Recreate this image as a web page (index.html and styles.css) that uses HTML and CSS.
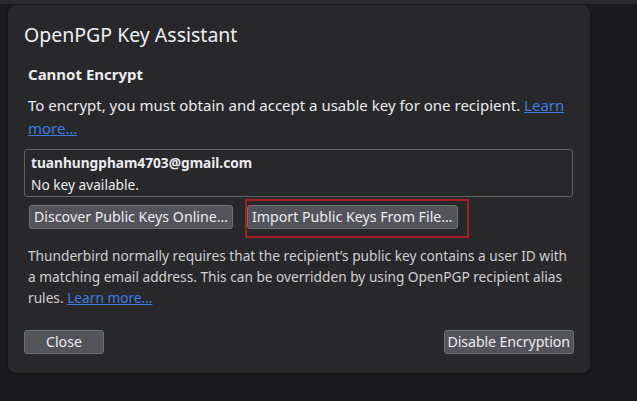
FILE: index.html
```html
<!DOCTYPE html>
<html lang="en">
<head>
<meta charset="utf-8">
<title>OpenPGP Key Assistant</title>
<link rel="stylesheet" href="styles.css">
</head>
<body>
<div class="topbar"></div>
<div class="stage">
  <div class="dialog">
    <h1 class="title">OpenPGP Key Assistant</h1>
    <div class="content">
      <h2 class="heading">Cannot Encrypt</h2>
      <p class="intro">To encrypt, you must obtain and accept a usable key for one recipient. <a href="#" class="link">Learn more…</a></p>
    </div>
    <div class="recipient">
      <div class="email">tuanhungpham4703@gmail.com</div>
      <div class="status">No key available.</div>
    </div>
    <div class="actions">
      <button class="btn">Discover Public Keys Online…</button>
      <span class="highlight"><button class="btn">Import Public Keys From File…</button></span>
    </div>
    <p class="note">Thunderbird normally requires that the recipient’s public key contains a user ID with a matching email address. This can be overridden by using OpenPGP recipient alias rules. <a href="#" class="link">Learn more…</a></p>
    <div class="footer">
      <button class="btn btn-close">Close</button>
      <button class="btn btn-disable">Disable Encryption</button>
    </div>
  </div>
</div>
</body>
</html>
```

FILE: styles.css
```css
* { box-sizing: border-box; }
html, body {
  margin: 0;
  padding: 0;
  background: #1b1b1d;
  font-family: "Noto Sans", "Open Sans", sans-serif;
  color: #ececee;
}
body { width: 637px; height: 401px; overflow: hidden; }
.topbar {
  height: 4px;
  background: #2b2a2f;
}
.stage {
  padding: 1px 0 0 8px;
}
.dialog {
  width: 582px;
  height: 368px;
  background: #28282b;
  border-radius: 8px;
  box-shadow: 0 1px 3px rgba(0,0,0,0.5);
  padding: 0 16px;
  display: flex;
  flex-direction: column;
}
.title {
  margin: 17px 0 0 0;
  font-size: 19.5px;
  font-weight: 400;
  line-height: 26px;
  color: #f0f0f2;
}
.content { padding: 0 4px; }
.heading {
  margin: 15px 0 0 0;
  font-size: 15px;
  font-weight: 700;
  line-height: 22px;
}
.intro {
  margin: 9px 0 0 0;
  font-size: 15px;
  line-height: 23px;
}
.link {
  color: #3b7ee0;
  text-decoration: underline;
}
.recipient {
  margin-top: 9px;
  border: 1px solid #606064;
  border-radius: 3px;
  padding: 2px 6px 2px 6px;
  height: 48px;
  width: 549px;
}
.email {
  font-size: 13.7px;
  font-weight: 700;
  line-height: 22px;
}
.status {
  font-size: 13.7px;
  line-height: 22px;
}
.actions {
  display: flex;
  gap: 14px;
  margin: 8px 0 0 5px;
}
.btn {
  font-family: inherit;
  font-size: 14.2px;
  color: #ececee;
  background: #53535a;
  border: 1px solid #707077;
  border-radius: 3px;
  height: 24px;
  padding: 0 4px;
  line-height: 20px;
}
.highlight {
  position: relative;
  display: inline-flex;
}
.highlight::after {
  content: "";
  position: absolute;
  left: -2px;
  top: -6px;
  right: -11px;
  bottom: -9px;
  border: 2px solid #a81c24;
  pointer-events: none;
}
.note {
  margin: 16px 0 0 4px;
  font-size: 13.7px;
  line-height: 21px;
  color: #cfcfd2;
}
.footer {
  margin-top: auto;
  margin-bottom: 19px;
  display: flex;
  justify-content: space-between;
  width: 550px;
}
.btn-close { width: 80px; }
.btn-disable { padding: 0 3px; letter-spacing: -0.1px; }
```
